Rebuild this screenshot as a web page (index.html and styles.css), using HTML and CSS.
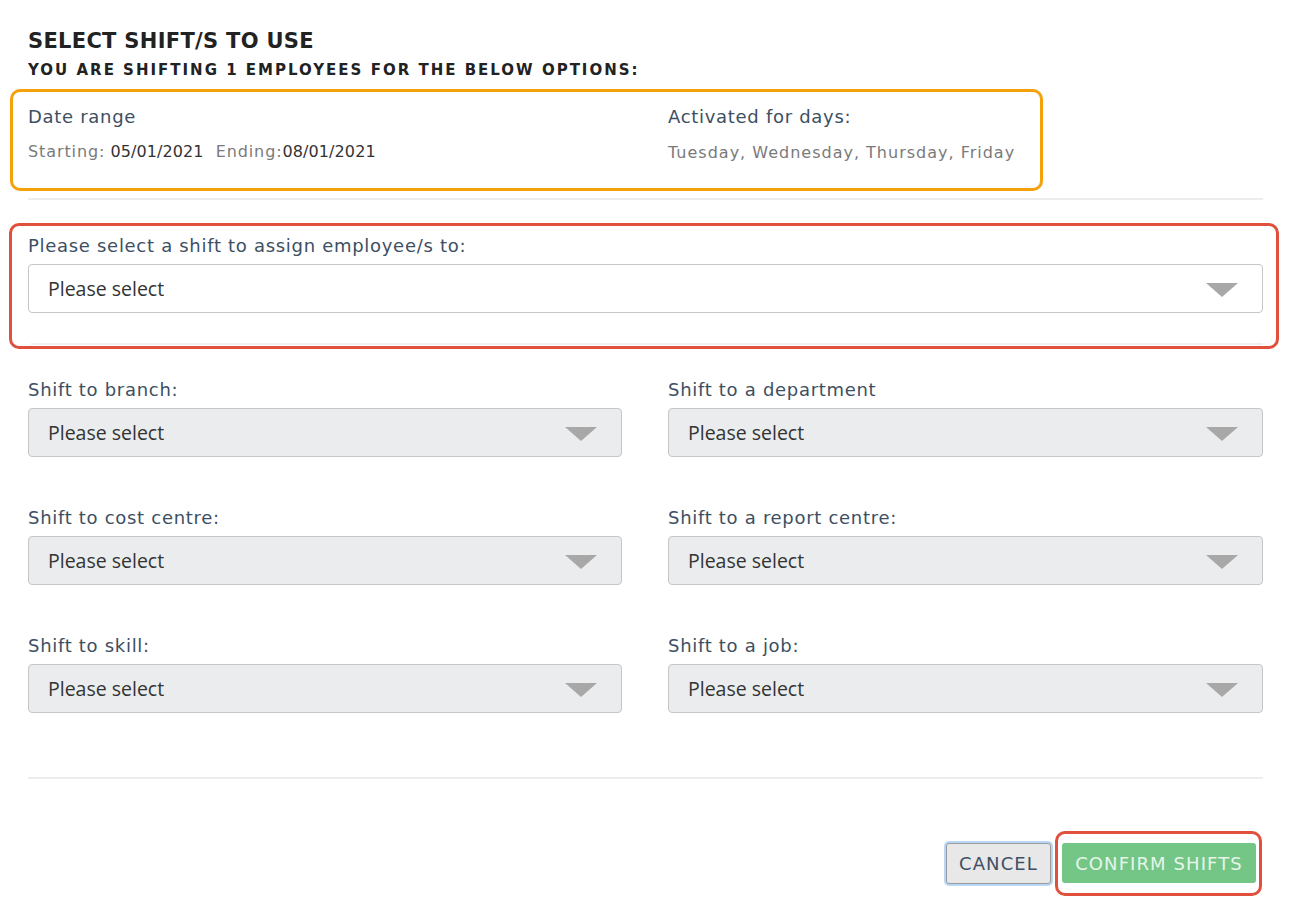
FILE: index.html
```html
<!DOCTYPE html>
<html>
<head>
<meta charset="utf-8">
<link rel="stylesheet" href="styles.css">
</head>
<body>
<div class="modal">
  <h1 class="title">SELECT SHIFT/S TO USE</h1>
  <h2 class="subtitle">YOU ARE SHIFTING 1 EMPLOYEES FOR THE BELOW OPTIONS:</h2>

  <div class="summary">
    <div class="summary-col">
      <div class="label">Date range</div>
      <div class="dates"><span class="muted">Starting:</span> <span class="val">05/01/2021</span><span class="muted gap">Ending:</span><span class="val">08/01/2021</span></div>
    </div>
    <div class="summary-col">
      <div class="label">Activated for days:</div>
      <div class="days">Tuesday, Wednesday, Thursday, Friday</div>
    </div>
  </div>

  <hr class="divider first">

  <div class="shift-box">
    <div class="label">Please select a shift to assign employee/s to:</div>
    <div class="select white"><span>Please select</span><i class="arrow"></i></div>
    <hr class="divider inner">
  </div>

  <div class="grid">
    <div class="field">
      <div class="label">Shift to branch:</div>
      <div class="select"><span>Please select</span><i class="arrow"></i></div>
    </div>
    <div class="field">
      <div class="label">Shift to a department</div>
      <div class="select"><span>Please select</span><i class="arrow"></i></div>
    </div>
    <div class="field">
      <div class="label">Shift to cost centre:</div>
      <div class="select"><span>Please select</span><i class="arrow"></i></div>
    </div>
    <div class="field">
      <div class="label">Shift to a report centre:</div>
      <div class="select"><span>Please select</span><i class="arrow"></i></div>
    </div>
    <div class="field">
      <div class="label">Shift to skill:</div>
      <div class="select"><span>Please select</span><i class="arrow"></i></div>
    </div>
    <div class="field">
      <div class="label">Shift to a job:</div>
      <div class="select"><span>Please select</span><i class="arrow"></i></div>
    </div>
  </div>

  <hr class="divider bottom">

  <div class="actions">
    <button class="btn cancel">CANCEL</button>
    <div class="confirm-wrap"><button class="btn confirm">CONFIRM SHIFTS</button></div>
  </div>
</div>
</body>
</html>
```

FILE: styles.css
```css
* { box-sizing: border-box; }
html, body { margin: 0; padding: 0; background: #fff; }
body {
  font-family: "DejaVu Sans", "Open Sans", sans-serif;
  color: #3d4f63;
}
.modal {
  width: 1291px;
  padding: 27px 28px 0 28px;
}
.title {
  margin: 0;
  font-size: 21px;
  font-weight: 700;
  color: #222;
  line-height: 28px;
  letter-spacing: 0.3px;
}
.subtitle {
  margin: 4px 0 0 0;
  font-size: 15px;
  font-weight: 700;
  color: #222;
  line-height: 22px;
  letter-spacing: 2px;
}
.summary {
  margin: 8px 220px 0 -18px;
  border: 3px solid #f5a20a;
  border-radius: 10px;
  height: 102px;
  padding: 13px 15px 0 15px;
  display: grid;
  grid-template-columns: 640px 1fr;
}
.label {
  font-size: 18px;
  line-height: 24px;
  color: #3d4f63;
  letter-spacing: 0.7px;
}
.dates {
  margin-top: 12px;
  font-size: 16px;
  line-height: 22px;
  color: #333;
}
.muted { color: #7a7a7a; letter-spacing: 0.9px; }
.gap { margin-left: 12px; }
.val { color: #333; letter-spacing: 0.1px; }
.days {
  margin-top: 13px;
  font-size: 16px;
  line-height: 22px;
  color: #7a7a7a;
  letter-spacing: 1px;
}
.divider {
  border: 0;
  height: 2px;
  background: #ededed;
  margin: 0;
}
.divider.first { margin-top: 7px; }
.shift-box {
  margin: 23px -16px 0 -19px;
  border: 3px solid #e0503c;
  border-radius: 10px;
  height: 126px;
  padding: 8px 13px 0 16px;
}
.select {
  margin-top: 6px;
  height: 49px;
  border: 1px solid #c6c6c6;
  border-radius: 4px;
  background: #ebecee;
  display: flex;
  align-items: center;
  justify-content: space-between;
  padding: 0 24px 0 19px;
  font-family: "Open Sans", sans-serif;
  font-size: 19.5px;
  color: #333;
}
.select.white { background: #fff; }
.arrow {
  width: 0; height: 0;
  border-left: 16px solid transparent;
  border-right: 16px solid transparent;
  border-top: 14px solid #a8a8a8;
  margin-top: 2px;
}
.divider.inner { margin-top: 30px; margin-left: 3px; background: #f0f0f0; }
.grid {
  margin-top: 29px;
  display: grid;
  grid-template-columns: 594px 595px;
  column-gap: 46px;
  row-gap: 49px;
}
.field .select { margin-top: 6px; }
.divider.bottom { margin-top: 64px; width: 1235px; }
.actions {
  margin-top: 52px;
  display: flex;
  justify-content: flex-end;
  align-items: center;
}
.btn {
  font-family: "DejaVu Sans", sans-serif;
  font-size: 18px;
  letter-spacing: 1.1px;
  border-radius: 3px;
  cursor: pointer;
}
.cancel {
  height: 41px;
  width: 105px;
  background: #e8e8e8;
  color: #3d4f63;
  border: 1px solid #9a9a9a;
  box-shadow: 0 0 0 2px #b9d8f7;
  margin-right: 4px;
  padding: 0;
}
.confirm-wrap {
  border: 3px solid #e0503c;
  border-radius: 10px;
  padding: 9px 3px 10px 4px;
  margin-right: 1px;
}
.confirm {
  height: 40px;
  width: 194px;
  background: #74c687;
  color: #e6f5e9;
  border: 0;
  display: block;
  padding: 0;
}
```
